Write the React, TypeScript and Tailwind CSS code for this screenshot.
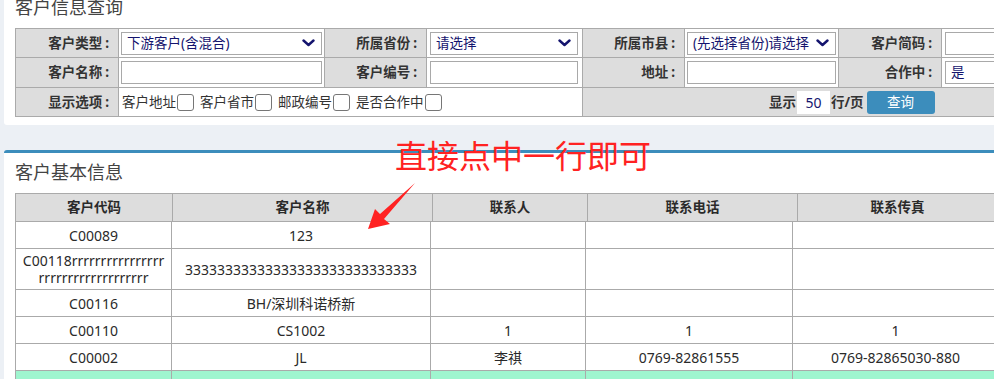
import React from "react";

const FONT = "font-['Noto_Sans','Noto_Sans_CJK_SC',sans-serif]";

function Chevron() {
  return (
    <svg width="13" height="8" viewBox="0 0 13 8" className="shrink-0">
      <path d="M1.5 1.5 L6.5 6 L11.5 1.5" fill="none" stroke="#14146e" strokeWidth="2.4" strokeLinecap="round" strokeLinejoin="round" />
    </svg>
  );
}

function SelectBox({ text }: { text: string }) {
  return (
    <div className="flex h-[23px] w-full items-center justify-between border border-[#a9a9a9] bg-white pl-[5px] pr-[6px] text-[#14146e]">
      <span className="whitespace-nowrap">{text}</span>
      <Chevron />
    </div>
  );
}

function InputBox({ text }: { text?: string }) {
  return (
    <div className="flex h-[23px] w-full items-center border border-[#a9a9a9] bg-white pl-[5px] text-[#14146e]">
      {text}
    </div>
  );
}

function Label({ text, h }: { text: string; h: string }) {
  return (
    <div className={`flex ${h} items-center justify-end border-b border-r border-[#aaa] bg-[#dddddd] pr-[9px] font-bold text-[#333]`}>
      <span className="whitespace-nowrap">
        {text}
        <span className="ml-[3px]">:</span>
      </span>
    </div>
  );
}

function Field({ children, h, px = "px-[2px]" }: { children: React.ReactNode; h: string; px?: string }) {
  return <div className={`flex ${h} items-center border-b border-r border-[#aaa] bg-white ${px}`}>{children}</div>;
}

function Check({ label }: { label: string }) {
  return (
    <span className="flex items-center">
      <span className="whitespace-nowrap">{label}</span>
      <span className="ml-[1px] mr-[6px] inline-block h-[17px] w-[17px] rounded-[3px] border border-[#767676] bg-white" />
    </span>
  );
}

const rows: { cells: React.ReactNode[]; h: string }[] = [
  { cells: ["C00089", "123", "", "", ""], h: "h-[27px]" },
  {
    cells: [
      <span className="flex flex-col items-center leading-[17px]">
        <span>C00118rrrrrrrrrrrrrrrr</span>
        <span>rrrrrrrrrrrrrrrrrrr</span>
      </span>,
      "33333333333333333333333333333",
      "",
      "",
      "",
    ],
    h: "h-[41px]",
  },
  { cells: ["C00116", "BH/深圳科诺桥新", "", "", ""], h: "h-[27px]" },
  { cells: ["C00110", "CS1002", "1", "1", "1"], h: "h-[27px]" },
  { cells: ["C00002", "JL", "李祺", "0769-82861555", "0769-82865030-880"], h: "h-[27px]" },
];

export default function App() {
  return (
    <div className={`relative h-[379px] w-[994px] overflow-hidden bg-[#ecf0f5] ${FONT} text-[13.5px] text-[#333]`}>
      {/* Query panel */}
      <div className="ml-[4px] h-[127px] w-[1200px] rounded-b-[3px] bg-white pl-[11px]">
        <div className="-mt-[2px] h-[30px] text-[18px] leading-[18px] text-[#444]">客户信息查询</div>
        <div className="grid w-max grid-cols-[103px_206px_102px_156px_102px_154px_103px_200px] border-l border-t border-[#aaa]">
          <Label text="客户类型" h="h-[29px]" />
          <Field h="h-[29px]">
            <SelectBox text="下游客户(含混合)" />
          </Field>
          <Label text="所属省份" h="h-[29px]" />
          <Field h="h-[29px]" px="pl-[3px] pr-[4px]">
            <SelectBox text="请选择" />
          </Field>
          <Label text="所属市县" h="h-[29px]" />
          <Field h="h-[29px]" px="px-[2px]">
            <SelectBox text="(先选择省份)请选择" />
          </Field>
          <Label text="客户简码" h="h-[29px]" />
          <Field h="h-[29px]" px="px-[3px]">
            <InputBox />
          </Field>

          <Label text="客户名称" h="h-[30px]" />
          <Field h="h-[30px]">
            <InputBox />
          </Field>
          <Label text="客户编号" h="h-[30px]" />
          <Field h="h-[30px]" px="pl-[3px] pr-[4px]">
            <InputBox />
          </Field>
          <Label text="地址" h="h-[30px]" />
          <Field h="h-[30px]" px="px-[2px]">
            <InputBox />
          </Field>
          <Label text="合作中" h="h-[30px]" />
          <Field h="h-[30px]" px="px-[3px]">
            <InputBox text="是" />
          </Field>

          <Label text="显示选项" h="h-[29px]" />
          <div className="col-span-3 flex h-[29px] items-center border-b border-r border-[#aaa] bg-white pl-[3px]">
            <Check label="客户地址" />
            <Check label="客户省市" />
            <Check label="邮政编号" />
            <Check label="是否合作中" />
          </div>
          <div className="col-span-4 flex h-[29px] items-center border-b border-r border-[#aaa] bg-[#dddddd] pl-[186px]">
            <span className="font-bold">显示</span>
            <span className="mx-[1px] flex h-[23px] w-[33px] items-center justify-center bg-white text-[14px] text-[#14146e]">50</span>
            <span className="font-bold">行/页</span>
            <button className="ml-[3px] flex h-[23px] w-[68px] items-center justify-center rounded-[3px] bg-[#3c8dbc] text-white">
              查询
            </button>
          </div>
        </div>
      </div>

      {/* Result panel */}
      <div className="ml-[4px] mt-[25px] h-[300px] w-[1200px] rounded-t-[3px] border-t-[3px] border-[#3c8dbc] bg-white pl-[11px]">
        <div className="mt-[10px] h-[30px] text-[18px] leading-[18px] text-[#444]">客户基本信息</div>
        <div className="grid w-max grid-cols-[157px_260px_155px_210px_200px] border-l border-t border-[#aaa]">
          {["客户代码", "客户名称", "联系人", "联系电话", "联系传真"].map((t) => (
            <div key={t} className="flex h-[28px] items-center justify-center border-b border-r border-[#aaa] bg-[#dddddd] font-bold text-[#2a2a2a]">
              {t}
            </div>
          ))}
        </div>
        <div className="grid w-max grid-cols-[156px_259px_155px_207px_206px] border-l border-[#aaa] text-[14px] text-[#2a2a2a]">
          {rows.map((r, i) =>
            r.cells.map((c, j) => (
              <div key={`${i}-${j}`} className={`flex ${r.h} items-center justify-center border-b border-r border-[#aaa] text-center`}>
                {c}
              </div>
            ))
          )}
          {[0, 1, 2, 3, 4].map((j) => (
            <div key={`g-${j}`} className="h-[27px] border-b border-r border-[#aaa] bg-[#9ff5cf]" />
          ))}
        </div>
      </div>

      {/* Annotation overlay */}
      <div className="absolute left-[395px] top-[140px] whitespace-nowrap text-[32px] leading-[32px] text-[#ff2222]">直接点中一行即可</div>
      <svg className="absolute left-0 top-0" width="994" height="379" viewBox="0 0 994 379">
        <polygon points="368,229 375,209 380,214 415,183 384,219 390,224" fill="#ff2222" />
      </svg>
    </div>
  );
}
